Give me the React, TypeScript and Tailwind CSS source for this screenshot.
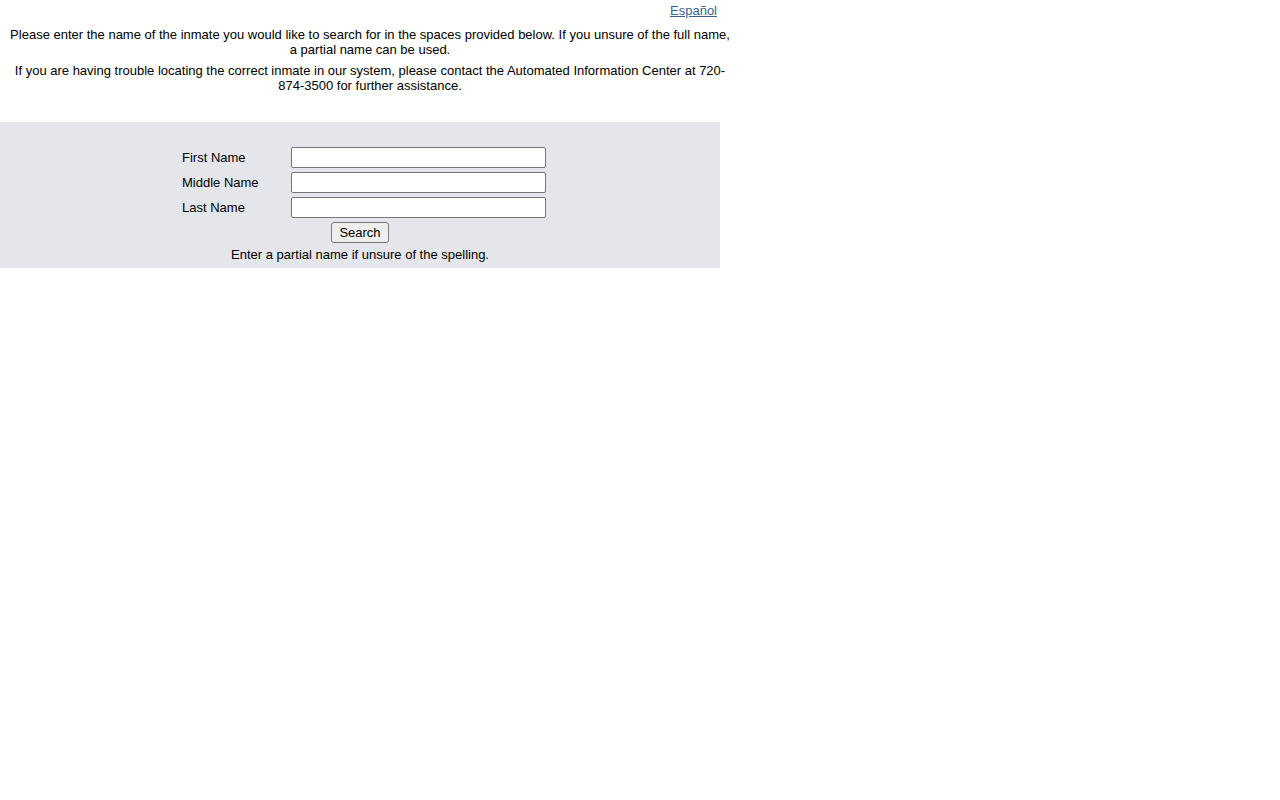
import { useState } from 'react';

const fields = [
  { key: 'first', label: 'First Name' },
  { key: 'middle', label: 'Middle Name' },
  { key: 'last', label: 'Last Name' },
];

const App = () => {
  const [values, setValues] = useState<Record<string, string>>({ first: '', middle: '', last: '' });

  return (
    <div className="min-h-screen bg-white text-black font-['Liberation_Sans',Arial,sans-serif] text-[13px] leading-[15px]">
      <div className="w-[740px]">
        {/* Language link */}
        <div className="pt-[3px] pr-[23px] text-right">
          <a href="#" className="text-[#3b5f8f] underline">
            Español
          </a>
        </div>

        {/* Intro */}
        <div className="px-[8px]">
          <p className="mt-[9px] text-center">
            Please enter the name of the inmate you would like to search for in the spaces provided below. If you unsure of the
            full name, a partial name can be used.
          </p>
          <p className="mt-[6px] text-center">
            If you are having trouble locating the correct inmate in our system, please contact the Automated Information Center
            at 720-874-3500 for further assistance.
          </p>
        </div>

        {/* Search form */}
        <div className="mt-[29px] w-[720px] bg-[#e5e6eb] pt-[25px] pb-[6px]">
          <div className="ml-[182px] flex flex-col gap-[4px]">
            {fields.map((f) => (
              <div key={f.key} className="flex items-center">
                <label className="w-[109px]">{f.label}</label>
                <input
                  type="text"
                  value={values[f.key]}
                  onChange={(e) => setValues({ ...values, [f.key]: e.target.value })}
                  className="w-[255px] h-[21px] bg-white border border-[#767676] rounded-[2px] px-[2px] outline-none"
                />
              </div>
            ))}
          </div>
          <div className="mt-[4px] flex justify-center">
            <button className="h-[21px] w-[58px] bg-[#efefef] border border-[#767676] rounded-[3px] text-[13px] leading-[15px]">
              Search
            </button>
          </div>
          <p className="mt-[4px] text-center">Enter a partial name if unsure of the spelling.</p>
        </div>
      </div>
    </div>
  );
};

export default App;
